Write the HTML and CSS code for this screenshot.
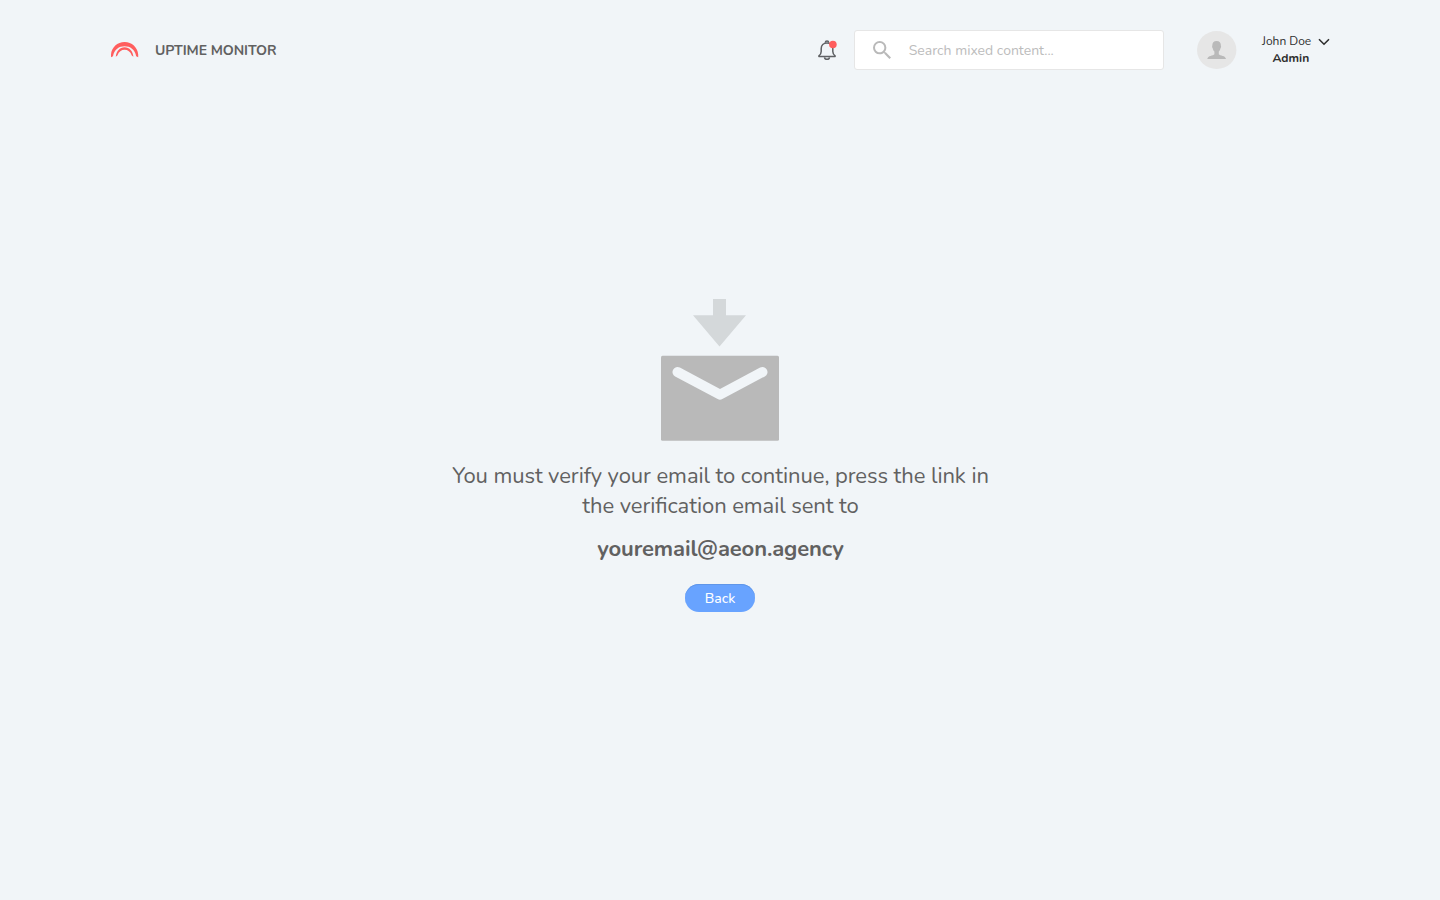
FILE: index.html
```html
<!DOCTYPE html>
<html lang="en">
<head>
<meta charset="utf-8">
<title>Uptime Monitor</title>
<link rel="stylesheet" href="styles.css">
</head>
<body>
<header class="header">
  <a class="brand">
    <svg class="brand-logo" width="28" height="16" viewBox="0 0 28 16" fill="#ff5e5e">
      <path d="M0 15.300V12.500C.6 5.500 6.300 .1 13.600 .1S26.600 5.500 27.200 12.500V15.300L25.200 14.200C23.800 7.500 19.200 4.300 13.600 4.300S3.400 7.500 2 14.200Z"/>
      <path d="M4.800 14.800C5.200 9 8.800 5.200 13.600 5.200S22 9 22.400 14.800L20.800 13.400C19.200 9.600 16.900 7.800 13.600 7.800S8 9.600 6.400 13.400Z"/>
    </svg>
    <span class="brand-name">UPTIME MONITOR</span>
  </a>
  <div class="bell">
    <svg width="20" height="22" viewBox="0 0 20 22" fill="none" stroke="#5f6164" stroke-width="1.500" stroke-linejoin="round">
      <path d="M.9 17.600V16.800C2.500 15.600 3.200 14.600 3.200 12.500V9.500C3.200 6.200 5.500 3.900 9 3.900S14.800 6.200 14.800 9.500V12.500C14.800 14.600 15.500 15.600 17.100 16.800V17.600Z"/>
      <path d="M7.400 3.800V3.300A1.600 1.300 0 0 1 10.600 3.300V3.800"/>
      <path d="M6.500 18.300C6.900 20.900 11.100 20.900 11.500 18.300"/>
      <circle cx="14.900" cy="5.500" r="3.800" fill="#ff5e5e" stroke="none"/>
    </svg>
  </div>
  <div class="search">
    <svg width="18" height="18" viewBox="3 3 17.500 17.500" fill="#b9b9b9"><path d="M15.500 14h-.79l-.28-.27A6.471 6.471 0 0 0 16 9.500 6.500 6.500 0 1 0 9.500 16c1.610 0 3.090-.59 4.230-1.570l.27.28v.79l5 4.990L20.490 19l-4.990-5zm-6 0C7.010 14 5 11.990 5 9.500S7.010 5 9.500 5 14 7.010 14 9.500 11.990 14 9.500 14z"/></svg>
    <span class="search-text">Search mixed content...</span>
  </div>
  <svg class="avatar" width="40" height="38" viewBox="0 0 40 38">
    <ellipse cx="19.700" cy="19" rx="19.700" ry="19" fill="#e6e6e6"/>
    <path fill="#b9b9b9" d="M19.600 10C22.500 10 24 12 23.900 14.700C24.300 15.100 24 16.700 23.500 17.200C23.200 18.800 22.500 19.800 21.800 20.500V23.200C23 24.800 28.600 24.400 29 28H10.300C10.700 24.400 16.200 24.800 17.400 23.200V20.500C16.700 19.800 16 18.800 15.700 17.200C15.200 16.700 14.900 15.100 15.300 14.700C15.200 12 16.700 10 19.600 10Z"/>
  </svg>
  <div class="user">
    <div class="user-row">
      <span class="user-name">John Doe</span>
      <svg width="12" height="8" viewBox="0 0 12 8" fill="none" stroke="#2e2e2e" stroke-width="1.600"><path d="M1 1.200L6 6.200L11 1.200"/></svg>
    </div>
    <span class="user-role">Admin</span>
  </div>
</header>
<main class="verify">
  <svg class="mail" width="118" height="142" viewBox="0 0 118 142">
    <path fill="#d4d8da" d="M52 0H65V16.300H85L58.500 47.500L32 16.300H52Z"/>
    <rect y="56.700" width="118" height="85" rx="1.500" fill="#b9b9b9"/>
    <path d="M16.500 73L59 95.700L101.500 73" fill="none" stroke="#f1f5f8" stroke-width="10" stroke-linecap="round" stroke-linejoin="round"/>
  </svg>
  <p class="message">You must verify your email to continue, press the link in<br>the veri<span class="ligature">fi</span>cation email sent to</p>
  <p class="email">youremail@aeon.agency</p>
  <button class="back">Back</button>
</main>
</body>
</html>
```
FILE: styles.css
```css
* { box-sizing: border-box; }
body {
  margin: 0;
  height: 900px;
  background: #f1f5f8;
  color: #616161;
  font-family: Nunito, Lato, sans-serif;
}
svg { display: block; flex: none; }
.header {
  display: flex;
  align-items: center;
  height: 100px;
  padding: 0 110px 0 111px;
}
.brand { display: flex; align-items: center; gap: 16px; }
.brand-name { padding-top: 1px; font-size: 14px; font-weight: 700; line-height: 20px; letter-spacing: -0.070px; white-space: nowrap; }
.bell { margin-left: auto; margin-right: 15.500px; }
.search {
  display: flex;
  align-items: center;
  gap: 18px;
  width: 310px;
  height: 40px;
  padding-left: 18px;
  background: #fff;
  border: 1px solid #e6e6e6;
  border-radius: 3px;
}
.search-text { font-size: 14px; color: #bcbcbc; white-space: nowrap; }
.avatar { margin-left: 33px; }
.user { width: 68px; margin-left: 25.300px; font-size: 12px; line-height: 17px; color: #2e2e2e; white-space: nowrap; }
.user-row { display: flex; align-items: center; justify-content: space-between; }
.user-role { display: block; padding-left: 10.500px; font-weight: 700; }
.verify { display: flex; flex-direction: column; align-items: center; padding-top: 199px; }
.message { margin: 20px 0 0; padding-left: 1px; font-size: 22px; line-height: 30px; letter-spacing: -0.075px; text-align: center; white-space: nowrap; }
.ligature { letter-spacing: 0; }
.email { margin: 13px 0 0; padding-left: 1px; font-size: 22px; line-height: 30px; font-weight: 700; letter-spacing: -0.120px; }
.back {
  width: 70px;
  height: 28px;
  margin-top: 20px;
  padding: 0;
  border: 0;
  border-radius: 14px;
  background: #68a3ff;
  box-shadow: inset 0 1px 0 #6096e8;
  color: #fff;
  font-family: inherit;
  font-size: 14px;
  font-weight: 500;
}
```
